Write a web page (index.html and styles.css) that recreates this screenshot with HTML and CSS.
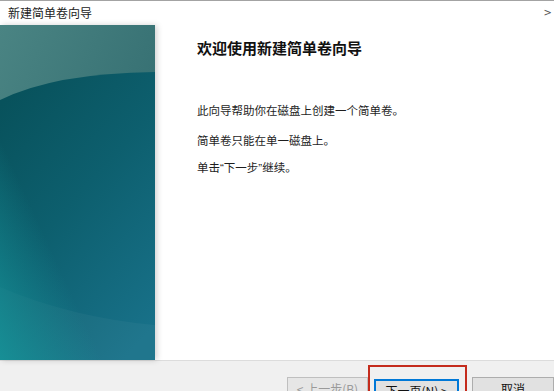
FILE: index.html
```html
<!DOCTYPE html>
<html lang="zh-CN">
<head>
  <meta charset="UTF-8" />
  <meta name="viewport" content="width=device-width, initial-scale=1.0" />
  <title>新建简单卷向导</title>
  <link rel="stylesheet" href="styles.css">
</head>
<body>
  <header class="titlebar">
    <span class="title">新建简单卷向导</span>
    <span class="more">&gt;</span>
  </header>

  <div class="main">
    <div class="banner">
      <svg viewBox="0 0 155 335" preserveAspectRatio="none" width="155" height="335">
        <defs>
          <linearGradient id="top" x1="0" y1="0" x2="1" y2="1">
            <stop offset="0" stop-color="#4a8483" />
            <stop offset="1" stop-color="#2a6469" />
          </linearGradient>
          <linearGradient id="deep" x1="0.2" y1="0" x2="0.8" y2="1">
            <stop offset="0" stop-color="#08525c" />
            <stop offset="0.45" stop-color="#0d5f6e" />
            <stop offset="1" stop-color="#187189" />
          </linearGradient>
          <linearGradient id="glow" x1="0" y1="1" x2="0.6" y2="0.4">
            <stop offset="0" stop-color="#16959a" stop-opacity="0.85" />
            <stop offset="0.55" stop-color="#16959a" stop-opacity="0" />
          </linearGradient>
        </defs>
        <rect width="155" height="335" fill="url(#top)" />
        <path d="M0,75 Q55,48 155,47 L155,335 L0,335 Z" fill="url(#deep)" />
        <path d="M0,262 Q70,292 155,300 L155,335 L0,335 Z" fill="#ffffff" fill-opacity="0.035" />
        <rect width="155" height="335" fill="url(#glow)" />
      </svg>
    </div>
    <div class="content">
      <h1>欢迎使用新建简单卷向导</h1>
      <p class="first">此向导帮助你在磁盘上创建一个简单卷。</p>
      <p class="second">简单卷只能在单一磁盘上。</p>
      <p class="third">单击<span class="quote">“</span>下一步<span class="quote">”</span>继续。</p>
    </div>
  </div>

  <footer class="buttons">
    <button class="btn" disabled>&lt; 上一步(B)</button>
    <div class="highlight">
      <button class="btn primary">下一页(N) &gt;</button>
    </div>
    <button class="btn">取消</button>
  </footer>
</body>
</html>
```

FILE: styles.css
```css
html, body {
  margin: 0;
  height: 100%;
  overflow: hidden;
}
body {
  font-family: "Noto Sans CJK SC", "Liberation Sans", sans-serif;
  background: #ffffff;
  color: #1a1a1a;
}
.titlebar {
  display: flex;
  justify-content: space-between;
  height: 24px;
  line-height: 24px;
  border-top: 1px solid #a3a3a3;
  padding: 0 2px 0 8px;
  font-size: 12px;
  color: #222;
}
.more {
  font-family: "DejaVu Sans", sans-serif;
  font-size: 10px;
  color: #555;
}
.main {
  display: flex;
  height: 335px;
}
.banner {
  width: 155px;
  flex-shrink: 0;
  box-shadow: 2px 0 6px rgba(0, 0, 0, 0.18);
  position: relative;
}
.banner svg {
  display: block;
}
.content {
  flex: 1;
  padding: 13px 0 0 42px;
}
.content h1 {
  margin: 0;
  font-size: 15px;
  line-height: 20px;
  font-weight: bold;
  color: #111;
}
.content p {
  margin: 0;
  font-size: 11.5px;
  line-height: 16px;
  color: #1e1e1e;
}
.content .quote {
  font-family: "Liberation Sans", sans-serif;
}
.content .first {
  margin-top: 44px;
}
.content .second {
  margin-top: 14px;
}
.content .third {
  margin-top: 11px;
}
.buttons {
  display: flex;
  align-items: flex-start;
  height: 30px;
  border-top: 1px solid #dcdcdc;
  background: #f0f0f0;
  padding: 16px 0 0 287px;
}
.btn {
  width: 82px;
  height: 23px;
  padding: 0;
  border: 1px solid #adadad;
  background: #e1e1e1;
  font-family: inherit;
  font-size: 12px;
  line-height: 21px;
  color: #111;
  flex-shrink: 0;
}
.btn[disabled] {
  background: #e6e6e6;
  border-color: #bfbfbf;
  color: #9a9a9a;
  width: 81px;
}
.btn.primary {
  width: 85px;
  border: 2px solid #0078d7;
  line-height: 19px;
}
.highlight {
  position: relative;
  margin: 0 13px 0 6px;
}
.highlight::after {
  content: "";
  position: absolute;
  left: -6px;
  top: -12px;
  right: -8px;
  height: 40px;
  border: 2px solid #c42b1c;
}
```
